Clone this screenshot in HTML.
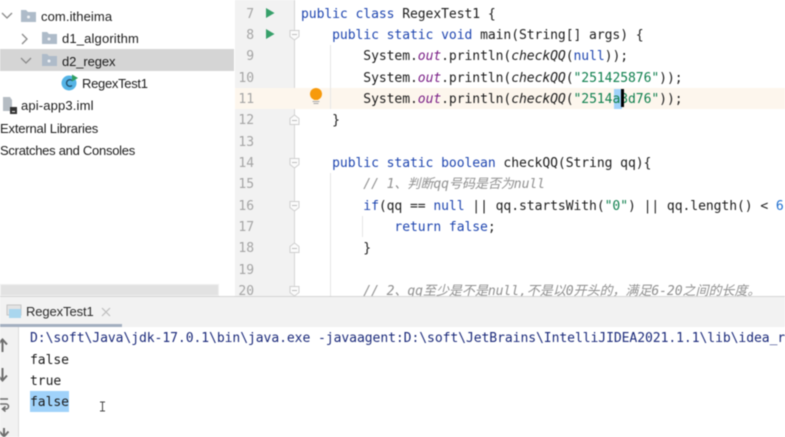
<!DOCTYPE html>
<html><head><meta charset="utf-8">
<style>
html,body{margin:0;padding:0;background:#fff}
#r{position:relative;width:785px;height:437px;overflow:hidden;background:#fff;filter:blur(.45px)}
#r div,#r span.a{position:absolute}
.t{font:13px/20px "Liberation Sans","Noto Sans CJK SC",sans-serif;color:#1c1c1c;white-space:pre}
.c{font:13.05px/21px "DejaVu Sans Mono","Noto Sans CJK SC",monospace;letter-spacing:-.07px;color:#1c1c1c;white-space:pre;left:301px}
.n{font:13.05px/21px "DejaVu Sans Mono",monospace;letter-spacing:-.07px;color:#a5a5a5;white-space:pre;text-align:right;width:22px;left:232px}
.k{color:#1f46b0}.s{color:#11804f}.o{color:#7a1f86;font-style:italic}.i{font-style:italic}.g{color:#909090;font-style:italic}.b{color:#1f6fd0}
.v{color:#1b2a7a}
svg{position:absolute;overflow:visible}
</style></head><body><div id="r">
<!-- tree -->
<div style="left:0;top:49px;width:234px;height:22px;background:#d5d5d5"></div>
<svg style="left:0;top:0" width="235" height="120" fill="none">
<path d="M2 13l5 5 5-5" stroke="#8a8a8a" stroke-width="1.3"/>
<path d="M22 34l5 5-5 5" stroke="#8a8a8a" stroke-width="1.3"/>
<path d="M21 58l5 5 5-5" stroke="#8a8a8a" stroke-width="1.3"/>
<g fill="#aebbc9">
<path d="M21 10h5l2 2h8v10H21z"/><path d="M42 32h5l2 2h8v10H42z"/><path d="M42 54h5l2 2h8v10H42z"/>
</g>
<g fill="#eef1f4"><circle cx="28.500" cy="17" r="1.500"/><circle cx="49" cy="39" r="1.500"/><circle cx="49" cy="61" r="1.500"/></g>
<circle cx="69" cy="83" r="7.500" fill="#55b4e6"/>
<path d="M72 80.500a3.300 3.300 0 1 0 0 5" stroke="#24506e" stroke-width="1.400"/>
<path d="M72 74.500l6 3.500-6 3.500z" fill="#2f9e5f"/>
<path d="M3 97h7l2 3v11H3z" fill="#b5bcc3"/>
<rect x="10" y="107" width="7" height="7" fill="#333"/><rect x="12" y="111" width="3" height="1" fill="#eee"/>
</svg>
<div class="t" style="left:41px;top:7px;letter-spacing:.1px">com.itheima</div>
<div class="t" style="left:62px;top:29px;letter-spacing:.15px">d1_algorithm</div>
<div class="t" style="left:62px;top:52px;letter-spacing:-.1px">d2_regex</div>
<div class="t" style="left:82px;top:74px;letter-spacing:-.3px">RegexTest1</div>
<div class="t" style="left:21px;top:96px;letter-spacing:.15px">api-app3.iml</div>
<div class="t" style="left:0;top:119px;letter-spacing:-.17px">External Libraries</div>
<div class="t" style="left:0;top:141px;letter-spacing:-.27px">Scratches and Consoles</div>
<div style="left:0;top:284px;width:219px;height:12px;background:#e2e2e2;border:1px solid #f0f0f0;box-sizing:border-box"></div>
<!-- gutter -->
<div style="left:235px;top:0;width:59px;height:296px;background:#f2f2f2"></div>
<div style="left:294px;top:0;width:1px;height:296px;background:#d6d6d6"></div>
<div style="left:235px;top:88px;width:550px;height:21px;background:#fdf6ed"></div>
<div style="left:330px;top:45px;width:1px;height:64px;background:#e6e6e6"></div>
<div style="left:330px;top:173px;width:1px;height:123px;background:#e6e6e6"></div>
<div style="left:362px;top:216px;width:1px;height:21px;background:#e6e6e6"></div>
<div class="n" style="top:4px">7</div>
<div class="n" style="top:25px">8</div>
<div class="n" style="top:46px">9</div>
<div class="n" style="top:68px">10</div>
<div class="n" style="top:89px">11</div>
<div class="n" style="top:110px">12</div>
<div class="n" style="top:132px">13</div>
<div class="n" style="top:153px">14</div>
<div class="n" style="top:174px">15</div>
<div class="n" style="top:196px">16</div>
<div class="n" style="top:217px">17</div>
<div class="n" style="top:238px">18</div>
<div class="n" style="top:260px">19</div>
<div class="n" style="top:281px">20</div>
<svg style="left:0;top:0" width="785" height="300" fill="none">
<path d="M266 8l8.500 5-8.500 5z" fill="#36a06a"/><path d="M266 29l8.500 5-8.500 5z" fill="#36a06a"/>
<g fill="#fbfbfb" stroke="#cfcfcf">
<path d="M290 30.500h9v6l-4.500 3.500-4.500-3.500z"/>
<path d="M290 124.500v-6l4.500-3.500 4.500 3.500v6z"/>
<path d="M290 158.500h9v6l-4.500 3.500-4.500-3.500z"/>
<path d="M290 201.500h9v6l-4.500 3.500-4.500-3.500z"/>
<path d="M290 252.500v-6l4.500-3.500 4.500 3.500v6z"/>
<path d="M290 286.500h9v6l-4.500 3.500-4.500-3.500z"/>
</g>
<g stroke="#bdbdbd"><path d="M292 34.500h5M292 120.500h5M292 162.500h5M292 205.500h5M292 248.500h5M292 290.500h5"/></g>
<circle cx="316" cy="94" r="6" fill="#f79a0c"/><path d="M313 97h6l-1 3h-4z" fill="#f79a0c"/>
<path d="M312.500 101.500h7M313.500 103.500h5" stroke="#a8a8a8"/>
</svg>
<!-- code -->
<div class="c" style="top:4px"><span class="k">public class</span> RegexTest1 {</div>
<div class="c" style="top:25px">    <span class="k">public static void</span> main(String[] args) {</div>
<div class="c" style="top:46px">        System.<span class="o">out</span>.println(<span class="i">checkQQ</span>(<span class="k">null</span>));</div>
<div class="c" style="top:68px">        System.<span class="o">out</span>.println(<span class="i">checkQQ</span>(<span class="s">"251425876"</span>));</div>
<div style="left:614px;top:89px;width:8px;height:20px;background:#a0d2fa"></div>
<div class="c" style="top:89px">        System.<span class="o">out</span>.println(<span class="i">checkQQ</span>(<span class="s">"2514a3d76"</span>));</div>
<div style="left:621px;top:89px;width:3px;height:18px;background:#000"></div>
<div class="c" style="top:110px">    }</div>
<div class="c" style="top:153px">    <span class="k">public static boolean</span> checkQQ(String qq){</div>
<div class="c g" style="top:174px">        // 1、判断qq号码是否为null</div>
<div class="c" style="top:196px">        <span class="k">if</span>(qq == <span class="k">null</span> || qq.startsWith(<span class="s">"0"</span>) || qq.length() &lt; <span class="b">6</span></div>
<div class="c" style="top:217px">            <span class="k">return false</span>;</div>
<div class="c" style="top:238px">        }</div>
<div class="c g" style="top:281px">        // 2、qq至少是不是null,不是以0开头的，满足6-20之间的长度。</div>
<!-- console -->
<div style="left:0;top:296px;width:785px;height:31px;background:#f2f2f2;border-top:1px solid #d4d4d4;box-sizing:border-box"></div>
<div style="left:0;top:324px;width:122px;height:3px;background:#a3afc0"></div>
<div style="left:0;top:327px;width:18px;height:110px;background:#f2f2f2;border-right:1px solid #dcdcdc"></div>
<svg style="left:0;top:0" width="120" height="437" fill="none">
<path d="M7 305h14v10H7z" fill="#e3e3e3" stroke="#c4c4c4"/><path d="M9 309h12v9H9z" fill="#a9d6ee"/>
<path d="M102 308l8 8m0-8l-8 8" stroke="#bdbdbd" stroke-width="1.200"/>
<g stroke="#6e6e6e" stroke-width="2">
<path d="M2.500 352v-13M-2 344.500l4.500-5 4.500 5"/>
<path d="M2.500 368v13M-2 375.500l4.500 5 4.500-5"/>
<path d="M0 399h8M0 404h6a2.500 2.500 0 0 1 0 5H3M5.500 406.500l-3 2.500 3 2.500" stroke-width="1.500"/>
<path d="M4 428v9M-.5 431.500l4.500 5 4.500-5"/>
</g>
<path d="M100 402h5M100 411h5M102.500 402v9" stroke="#444"/>
</svg>
<div class="t" style="left:26px;top:302px;color:#2b2b2b;letter-spacing:-.1px">RegexTest1</div>
<div class="c v" style="left:30px;top:328px">D:\soft\Java\jdk-17.0.1\bin\java.exe -javaagent:D:\soft\JetBrains\IntelliJIDEA2021.1.1\lib\idea_rt.jar</div>
<div class="c" style="left:30px;top:350px">false</div>
<div class="c" style="left:30px;top:371px">true</div>
<div style="left:30px;top:391px;width:39px;height:21px;background:#a0d2fa"></div>
<div class="c" style="left:30px;top:392px">false</div>
</div></body></html>
